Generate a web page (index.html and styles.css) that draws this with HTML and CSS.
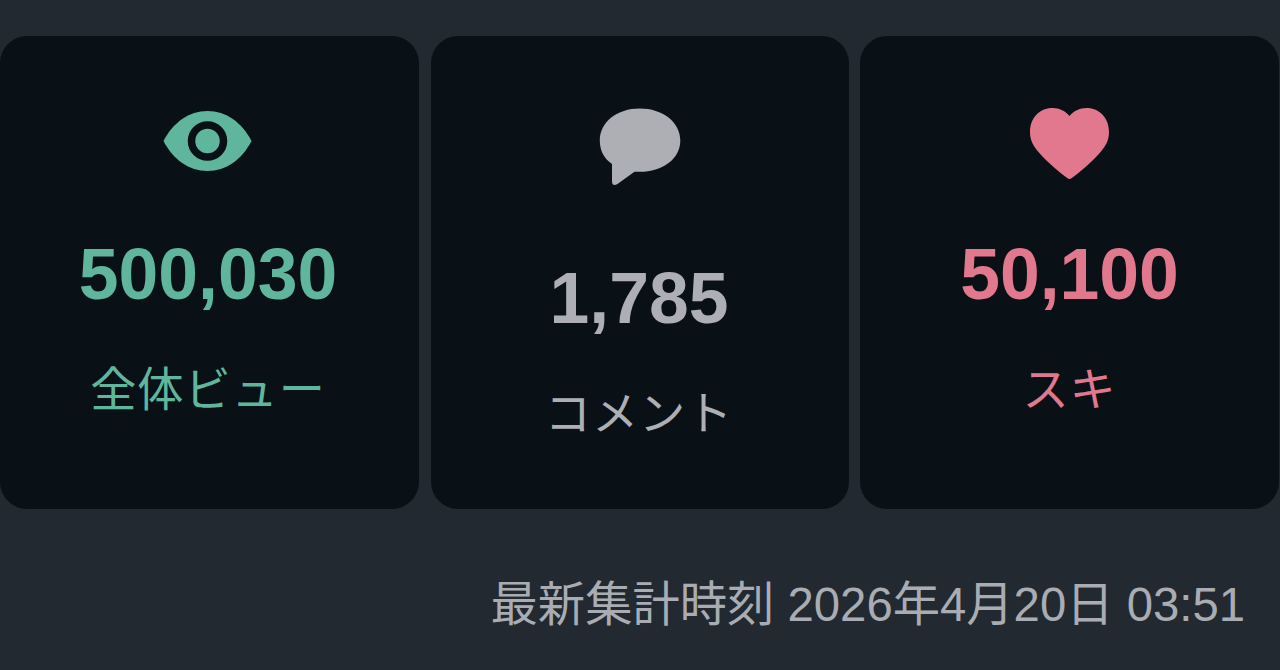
FILE: index.html
```html
<!DOCTYPE html>
<html lang="ja">
<head>
    <meta charset="UTF-8">
    <meta name="viewport" content="width=device-width, initial-scale=1.0">
    <title>ダッシュボード</title>
    <link rel="stylesheet" href="styles.css">
</head>
<body>
    <!-- 集計カード -->
    <div class="stats">
        <div class="card views">
            <svg class="icon" width="96" height="78" viewBox="0 0 96 78">
                <path d="M3.500 33C13 14.500 29 3 47.500 3S82 14.500 91.500 33C82 51.500 66 63 47.500 63S13 51.500 3.500 33Z"/>
                <circle class="ring" cx="47.500" cy="33" r="16"/>
            </svg>
            <div class="number">500,030</div>
            <div class="label">全体ビュー</div>
        </div>
        <div class="card comments">
            <svg class="icon" width="96" height="78" viewBox="0 0 96 78">
                <path d="M48.800 .5C71.500 .5 89.300 14 89.300 32.500C89.300 51 71.500 63.800 48.800 63.800H43.500L26.500 76Q21 79 21 73V56C13 50.500 8.800 42.500 8.800 32.500C8.800 14 26 .5 48.800 .5Z"/>
            </svg>
            <div class="number">1,785</div>
            <div class="label">コメント</div>
        </div>
        <div class="card likes">
            <svg class="icon" width="96" height="78" viewBox="0 0 96 78">
                <path d="M47.500 71C46 71 44.500 69.500 42.500 68C34 61.500 22.500 51.500 16 43.500C11 37.500 8 32 8 24C8 10 17.500 0 30.500 0C37.500 0 43.500 3 47.500 8C51.500 3 57.500 0 64.500 0C77.500 0 87 10 87 24C87 32 84 37.500 79 43.500C72.500 51.500 61 61.500 52.500 68C50.500 69.500 49 71 47.500 71Z"/>
            </svg>
            <div class="number">50,100</div>
            <div class="label">スキ</div>
        </div>
    </div>

    <p class="updated">最新集計時刻 2026年4月20日 03:51</p>
</body>
</html>
```
FILE: styles.css
```css
body {
    font-family: "Liberation Sans", "Noto Sans CJK JP", sans-serif;
    margin: 0;
    padding: 36px 0 0;
    background-color: #222930;
    color: #a9adb3;
}

.stats {
    display: grid;
    grid-template-columns: 419px 418px 419px;
    justify-content: space-between;
    margin-right: 1px;
}

.card {
    display: flex;
    flex-direction: column;
    align-items: center;
    box-sizing: border-box;
    height: 473px;
    padding-top: 72px;
    border-radius: 27px;
    background-color: #091117;
}

.icon {
    display: block;
    fill: currentColor;
}

.ring {
    fill: none;
    stroke: #091117;
    stroke-width: 7.5;
}

.number {
    margin-top: 48px;
    font-size: 71.5px;
    font-weight: bold;
    line-height: 80px;
}

.label {
    margin-top: 41px;
    font-size: 46.2px;
    letter-spacing: 0.9px;
    line-height: 70px;
}

.views {
    padding-right: 3px;
    color: #5fb69c;
}

.comments {
    padding-right: 1px;
    color: #adafb4;
}

.comments .number {
    margin-top: 72px;
}

.likes {
    color: #e2788e;
}

.updated {
    margin: 61px 35px 0 0;
    font-size: 47.3px;
    line-height: 70px;
    text-align: right;
    white-space: nowrap;
}
```
